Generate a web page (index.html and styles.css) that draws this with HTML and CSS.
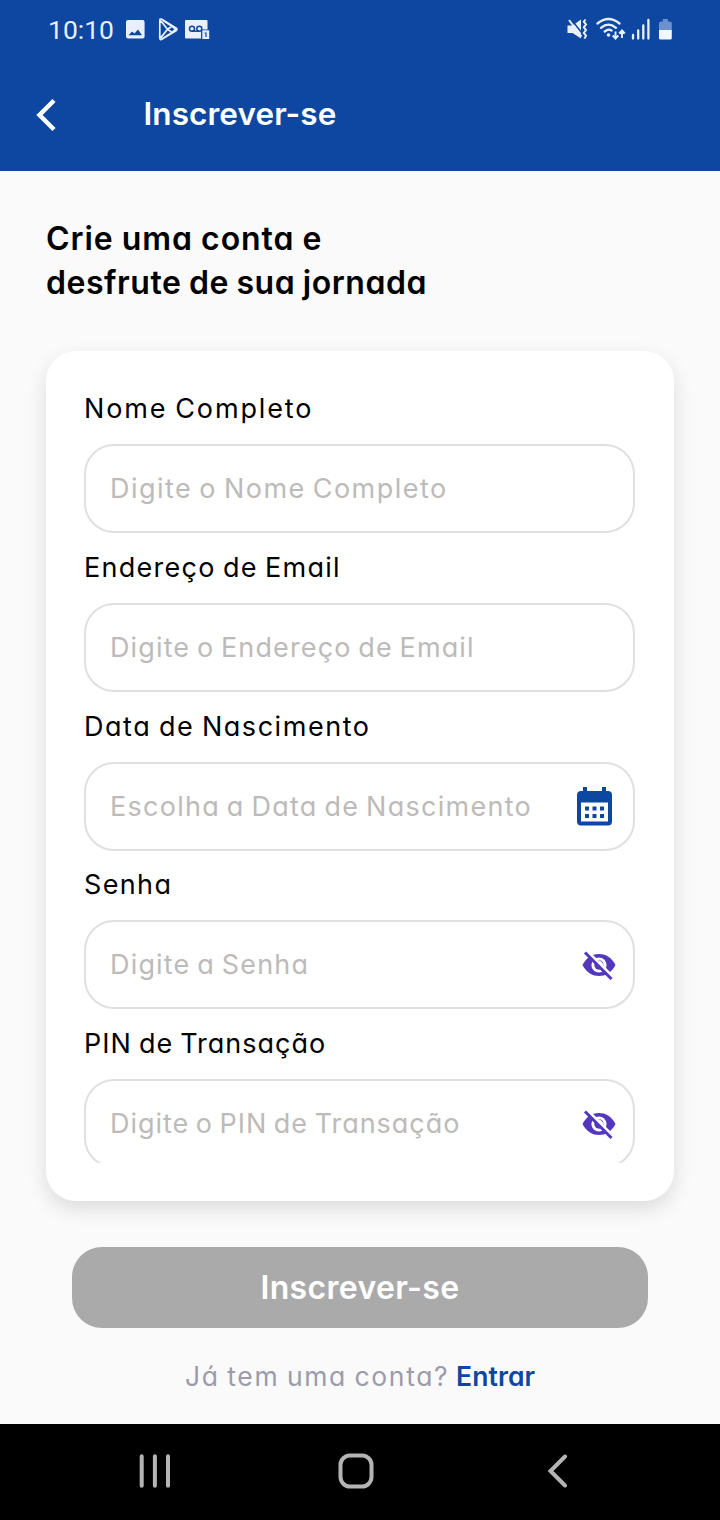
FILE: index.html
```html
<!DOCTYPE html>
<html lang="pt">
<head>
<meta charset="utf-8">
<title>Inscrever-se</title>
<link rel="stylesheet" href="styles.css">
</head>
<body>
<div class="screen">
  <header class="header">
    <div class="status">
      <span class="clock">10:10</span>
      <svg class="status-left" width="88" height="26" viewBox="124 17 88 26">
        <rect x="126" y="20" width="18.600" height="18.600" rx="2" fill="#e9effc"/>
        <path d="M128.500 35.200l3.500-3.700 2.500 2 3.500-4 4 5.700z" fill="#0d47a1"/>
        <path d="M159.800 20.500v17.600q0 2.200 2 1.200L176 30.700q2-1.400 0-2.800L161.800 19.300q-2-1-2 1.200zM160.500 20.500l7 8.800-7 8.800M163 20.500l9 5.700-4.500 3.100 4.500 3.100-9 5.700M172 26.200l3.500 3.100-3.500 3.100" fill="none" stroke="#e9effc" stroke-width="1.700" stroke-linejoin="round"/>
        <rect x="185" y="20" width="22.500" height="18.600" rx="1" fill="#e9effc"/>
        <g fill="none" stroke="#0d47a1" stroke-width="1.500"><circle cx="192" cy="28.700" r="2.500"/><circle cx="199.300" cy="28.700" r="2.500"/><path d="M192 31.200h7.300"/></g>
        <path d="M201 29.500h8.500v10H201z" fill="#0d47a1"/>
        <rect x="202.300" y="30.300" width="6.900" height="8.700" fill="#e9effc"/>
        <path d="M204.500 33h1.500v4" fill="none" stroke="#0d47a1" stroke-width="1.200"/>
      </svg>
      <svg class="status-right" width="110" height="26" viewBox="565 17 110 26">
        <path d="M567.500 25.500h5l8.500-6v19l-8.500-5.500h-5z" fill="#e9effc"/>
        <path d="M570.800 19l12 15" stroke="#0d47a1" stroke-width="1.500"/>
        <path d="M569 20l12.500 16.500" stroke="#e9effc" stroke-width="2"/>
        <path d="M585.500 19.500l-1.700 2.200 2.200 2.800-2.200 2.800 2.200 2.800-2.200 2.800 2.200 2.700-1.500 3" fill="none" stroke="#e9effc" stroke-width="2"/>
        <g fill="none" stroke="#e9effc" stroke-width="2.300" stroke-linecap="round"><path d="M597.500 23.500Q608.500 14.500 619.500 23.500M601 27.800Q608.500 21.500 616 27.800M604.700 31.500Q608.500 28.500 611.500 30.500"/></g>
        <circle cx="608.500" cy="35" r="1.800" fill="#e9effc"/>
        <path d="M615.500 31.500v7M612.700 35.500l2.800 3 2.800-3M622 38v-7M619.200 33.500l2.800-3 2.800 3" fill="none" stroke="#e9effc" stroke-width="1.900"/>
        <path d="M633 35v3.500M638.200 30.500v8M643.300 25.500v13M648.400 20v18.500" stroke="#e9effc" stroke-width="2.300" stroke-linecap="round"/>
        <path d="M659 30v-6.500q0-2 2-2h1.800v-2.500h5v2.500h2q2 0 2 2v6.500z" fill="#6d91cc"/>
        <path d="M659 30h12.800v8q0 1.500-1.500 1.500h-9.800q-1.500 0-1.500-1.500z" fill="#f3f7ff"/>
      </svg>
    </div>
    <div class="appbar">
      <svg class="back" width="22" height="34" viewBox="0 0 22 34"><path d="M19 2.500L4.500 17 19 31.500" fill="none" stroke="#fff" stroke-width="4.500"/></svg>
      <h1 class="title">Inscrever-se</h1>
    </div>
  </header>

  <main class="main">
    <h2 class="heading"><span class="h-a">Crie uma conta e</span><br><span class="h-b">desfrute de sua jornada</span></h2>
    <section class="card">
      <div class="form">
        <div class="group"><div class="label l1">Nome Completo</div><div class="field"><span class="hint p1">Digite o Nome Completo</span></div></div>
        <div class="group"><div class="label l2">Endereço de Email</div><div class="field"><span class="hint p2">Digite o Endereço de Email</span></div></div>
        <div class="group"><div class="label l3">Data de Nascimento</div><div class="field"><span class="hint p3">Escolha a Data de Nascimento</span>
          <svg class="calendar" width="35" height="39" viewBox="0 0 35 39"><path fill="#0d47a1" fill-rule="evenodd" d="M6 0h4v4h15V0h4v4h2q4 0 4 4v26.500q0 4-4 4H4q-4 0-4-4V8q0-4 4-4h2zM4 15.500v19h27v-19z"/><path fill="#0d47a1" d="M8 19.500h4v4H8zM15.500 19.500h4v4h-4zM23 19.500h4v4h-4zM8 27h4v4H8zM15.500 27h4v4h-4zM23 27h4v4h-4z"/></svg></div></div>
        <div class="group"><div class="label l4">Senha</div><div class="field"><span class="hint p4">Digite a Senha</span>
          <svg class="eye" width="34" height="30" viewBox="0 0 34 30"><path d="M.5 14C4.500 6 11 3 17 3s12.500 3 16.500 11c-4 8-10.500 11-16.500 11S4.500 22 .5 14z" fill="#5338bd"/><circle cx="17" cy="14" r="7.600" fill="#fff"/><circle cx="17" cy="14" r="4.700" fill="#5338bd"/><path d="M17.500 9l5 5-3.500-.5q0-2-2-2.500z" fill="#fff"/><path d="M5 0L32 27" stroke="#fff" stroke-width="3"/><path d="M3 1.500L29.500 28" stroke="#5338bd" stroke-width="3"/></svg></div></div>
        <div class="group"><div class="label l5">PIN de Transação</div><div class="field"><span class="hint p5">Digite o PIN de Transação</span>
          <svg class="eye" width="34" height="30" viewBox="0 0 34 30"><path d="M.5 14C4.500 6 11 3 17 3s12.500 3 16.500 11c-4 8-10.500 11-16.500 11S4.500 22 .5 14z" fill="#5338bd"/><circle cx="17" cy="14" r="7.600" fill="#fff"/><circle cx="17" cy="14" r="4.700" fill="#5338bd"/><path d="M17.500 9l5 5-3.500-.5q0-2-2-2.500z" fill="#fff"/><path d="M5 0L32 27" stroke="#fff" stroke-width="3"/><path d="M3 1.500L29.500 28" stroke="#5338bd" stroke-width="3"/></svg></div></div>
      </div>
    </section>
    <div class="submit"><span class="submit-text">Inscrever-se</span></div>
    <p class="login"><span class="question">Já tem uma conta?</span><span class="enter">Entrar</span></p>
  </main>

  <nav class="nav">
    <svg width="34" height="34" viewBox="0 0 34 34"><path d="M3.700 2.200v29.600M16.900 2.200v29.600M30 2.200v29.600" stroke="#b4b4b4" stroke-width="4" stroke-linecap="round"/></svg>
    <svg class="home" width="36" height="36" viewBox="0 0 36 36"><rect x="2.500" y="2.500" width="31" height="31" rx="9.500" fill="none" stroke="#b4b4b4" stroke-width="4"/></svg>
    <svg class="nav-back" width="22" height="34" viewBox="0 0 22 34"><path d="M18 2.500L3.500 17 18 31.500" fill="none" stroke="#b4b4b4" stroke-width="4" stroke-linecap="round"/></svg>
  </nav>
</div>
</body>
</html>
```
FILE: styles.css
```css
* { box-sizing: border-box; margin: 0; padding: 0; }
body { font-family: Inter, "Liberation Sans", sans-serif; font-feature-settings: "cv11"; background: #fafafa; }
svg { display: block; flex: none; }
span, .label, .title { white-space: nowrap; }
.screen { width: 720px; height: 1520px; display: flex; flex-direction: column; overflow: hidden; background: #fafafa; }

.header { height: 171px; background: #0d47a1; }
.status { height: 60px; display: flex; align-items: center; padding: 0 45px 0 48px; }
.clock { width: 76px; font: 400 26.500px/58px Roboto, sans-serif; color: #e9effc; }
.status-right { margin-left: auto; }
.appbar { height: 110px; display: flex; align-items: center; padding-left: 35px; }
.title { margin-left: 86.500px; padding-bottom: 3px; font-size: 31.500px; font-weight: 600; color: #fff; letter-spacing: 0.080px; }

.main { height: 1253px; padding: 46px 46px 0; }
.heading { height: 134px; font-size: 32px; line-height: 44px; font-weight: 600; color: #000; word-spacing: -1px; }
.h-a { letter-spacing: 0.960px; }
.h-b { letter-spacing: 0.530px; }
.card { height: 850px; background: #fff; border-radius: 30px; padding: 23.300px 39px 38px 38px; box-shadow: 0 8px 20px rgba(0,0,0,.12); }
.form { height: 788.700px; overflow: hidden; }
.group { height: 158.750px; }
.label { height: 69.750px; line-height: 70px; font-size: 27px; font-weight: 380; color: #000; word-spacing: -1.500px; }
.field { height: 89px; border: 2px solid #e0e0e0; border-radius: 30px; display: flex; align-items: center; padding: 0 17px 0 24px; }
.hint { flex: 1; font-size: 27px; font-weight: 380; color: #bdbaba; word-spacing: -2px; }
.l1 { letter-spacing: 1.850px; }
.l2 { letter-spacing: 1.260px; }
.l3 { letter-spacing: 1.540px; }
.l4 { letter-spacing: 1.350px; line-height: 68px; }
.l5 { letter-spacing: 0.990px; }
.p1 { letter-spacing: 1.460px; }
.p2 { letter-spacing: 1.130px; }
.p3 { letter-spacing: 1.260px; }
.p4 { letter-spacing: 1.180px; }
.p5 { letter-spacing: 0.970px; }
.calendar { margin-right: 4px; }
.eye { margin-top: 2px; }

.submit { margin: 46px 26px 0; height: 81px; border-radius: 30px; background: #aaa; display: flex; align-items: center; justify-content: center; }
.submit-text { color: #fff; font-size: 32px; font-weight: 600; letter-spacing: 0.330px; padding-bottom: 1px; }
.login { display: flex; height: 98px; padding-left: 139px; line-height: 96px; font-size: 26.500px; color: #9c9bab; }
.question { width: 271px; letter-spacing: 1.650px; font-weight: 380; word-spacing: -1.500px; }
.enter { font-weight: 600; color: #0d47a1; letter-spacing: 0.100px; }

.nav { height: 96px; background: #000; display: flex; align-items: center; padding: 0 150px 2px 138px; }
.home { margin-left: 166px; }
.nav-back { margin-left: 173px; }
```
